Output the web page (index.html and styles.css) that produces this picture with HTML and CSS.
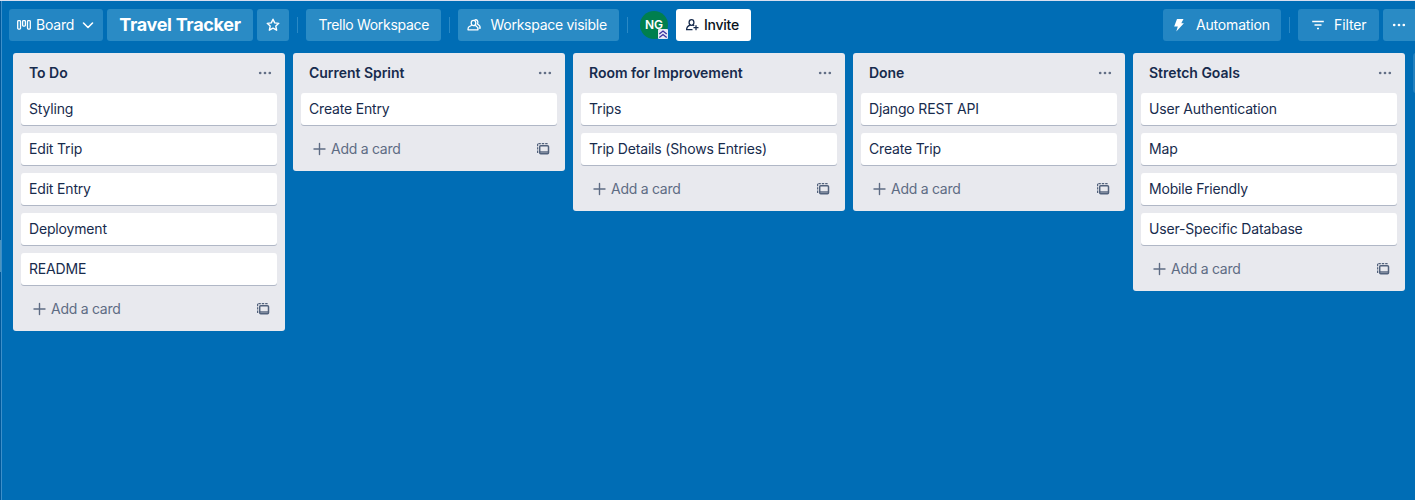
FILE: index.html
```html
<!DOCTYPE html>
<html lang="en">
<head>
<meta charset="utf-8">
<title>Travel Tracker</title>
<link rel="stylesheet" href="styles.css">
</head>
<body>
<svg class="sprite" width="0" height="0">
  <symbol id="dots" viewBox="0 0 16 16"><g fill="currentColor"><circle cx="3.2" cy="8" r="1.35"/><circle cx="8" cy="8" r="1.35"/><circle cx="12.8" cy="8" r="1.35"/></g></symbol>
  <symbol id="plus" viewBox="0 0 16 16"><path d="M8.500 2.500v11M3 8h11" stroke="currentColor" stroke-width="1.4" stroke-linecap="round"/></symbol>
  <symbol id="template" viewBox="0 0 16 16"><g fill="none" stroke="currentColor"><path d="M2.600 12V2.600H13.500" stroke-width="1.200" stroke-dasharray="2.4 1"/><rect x="4.700" y="4.700" width="8.800" height="8" rx="1" stroke-width="1.5"/><path d="M4.800 11h8.600" stroke-width="1.4"/></g></symbol>
</svg>
<div class="app">
  <div class="drawer"><span class="drawer-handle"></span></div>
  <main class="board">
    <header class="header">
      <button class="btn view"><svg width="16" height="16" viewBox="0 0 16 16"><g fill="none" stroke="currentColor" stroke-width="1.3"><rect x="1.7" y="3.7" width="2.8" height="8.4" rx=".8"/><rect x="6.6" y="3.7" width="2.8" height="5.4" rx=".8"/><rect x="11.5" y="3.7" width="2.8" height="8.4" rx=".8"/></g></svg><span class="t-board">Board</span><svg class="chevron" width="12" height="12" viewBox="0 0 12 12"><path d="M1.5 4 6 8.5 10.5 4" fill="none" stroke="currentColor" stroke-width="1.6" stroke-linecap="round" stroke-linejoin="round"/></svg></button>
      <h1 class="btn name">Travel Tracker</h1>
      <button class="btn star"><svg width="16" height="16" viewBox="0 0 16 16"><path d="M8 2.200l1.700 3.700 4.100.45-3 2.750.85 4.100L8 11.200 4.350 13.200l.85-4.100-3-2.750 4.100-.45z" fill="none" stroke="currentColor" stroke-width="1.4" stroke-linejoin="round"/></svg></button>
      <i class="divider"></i>
      <button class="btn workspace">Trello Workspace</button>
      <i class="divider"></i>
      <button class="btn visible"><svg width="16" height="16" viewBox="0 0 16 16"><g fill="none" stroke="currentColor" stroke-width="1.3" stroke-linejoin="round"><ellipse cx="7.500" cy="6" rx="2.300" ry="2.700"/><path d="M5.800 8.200 3 9.700c-.8.500-1 1.500-1 3.100h10c0-1.600-.2-2.600-1-3.100L9.200 8.200"/><path d="M8.500 3c2.700-.9 4.100 1.300 3 4l1.600 1.300c.9.700 1.100 1.500 1.100 2.900h-1.700"/></g></svg><span>Workspace visible</span></button>
      <i class="divider"></i>
      <div class="avatar">NG<svg class="admin" width="10" height="10" viewBox="0 0 10 10"><rect width="10" height="10" rx="1" fill="#e9e8f5"/><path d="M1.300 5 5 2l3.700 3M1.300 8.500 5 5.500l3.700 3" fill="none" stroke="#3b2fa0" stroke-width="1.300"/></svg></div>
      <button class="btn invite"><svg width="16" height="16" viewBox="0 0 16 16"><g fill="none" stroke="currentColor" stroke-width="1.3" stroke-linecap="round"><ellipse cx="7.500" cy="5.500" rx="2.400" ry="2.800"/><path d="M8 12.700H2.600c0-2.600.8-3.600 3.500-4.600M9 8.100l.8.400M12 8.700v4M10 10.700h4"/></g></svg><span>Invite</span></button>
      <span class="spacer"></span>
      <button class="btn automation"><svg width="16" height="16" viewBox="0 0 16 16"><path d="M6 2h6.500l-2.200 4.200h2.600L5.300 14.500l1.500-5H3.200z" fill="currentColor"/></svg><span>Automation</span></button>
      <i class="divider"></i>
      <button class="btn filter"><svg width="16" height="16" viewBox="0 0 16 16"><path d="M2.200 4.500h11.600M4.500 8h7M7 11.500h2" stroke="currentColor" stroke-width="1.500"/></svg><span>Filter</span></button>
      <button class="btn more"><svg width="16" height="16"><use href="#dots"/></svg></button>
    </header>
    <div class="lists">
      <section class="list">
        <h2><span>To Do</span><svg width="16" height="16"><use href="#dots"/></svg></h2>
        <div class="card">Styling</div><div class="card">Edit Trip</div><div class="card">Edit Entry</div><div class="card">Deployment</div><div class="card">README</div>
        <div class="add"><svg width="16" height="16"><use href="#plus"/></svg><span>Add a card</span><svg class="tpl" width="16" height="16"><use href="#template"/></svg></div>
      </section>
      <section class="list">
        <h2><span>Current Sprint</span><svg width="16" height="16"><use href="#dots"/></svg></h2>
        <div class="card">Create Entry</div>
        <div class="add"><svg width="16" height="16"><use href="#plus"/></svg><span>Add a card</span><svg class="tpl" width="16" height="16"><use href="#template"/></svg></div>
      </section>
      <section class="list">
        <h2><span>Room for Improvement</span><svg width="16" height="16"><use href="#dots"/></svg></h2>
        <div class="card">Trips</div><div class="card">Trip Details (Shows Entries)</div>
        <div class="add"><svg width="16" height="16"><use href="#plus"/></svg><span>Add a card</span><svg class="tpl" width="16" height="16"><use href="#template"/></svg></div>
      </section>
      <section class="list">
        <h2><span>Done</span><svg width="16" height="16"><use href="#dots"/></svg></h2>
        <div class="card">Django REST API</div><div class="card">Create Trip</div>
        <div class="add"><svg width="16" height="16"><use href="#plus"/></svg><span>Add a card</span><svg class="tpl" width="16" height="16"><use href="#template"/></svg></div>
      </section>
      <section class="list">
        <h2><span>Stretch Goals</span><svg width="16" height="16"><use href="#dots"/></svg></h2>
        <div class="card">User Authentication</div><div class="card">Map</div><div class="card">Mobile Friendly</div><div class="card">User-Specific Database</div>
        <div class="add"><svg width="16" height="16"><use href="#plus"/></svg><span>Add a card</span><svg class="tpl" width="16" height="16"><use href="#template"/></svg></div>
      </section>
      <div class="add-list"></div>
    </div>
  </main>
</div>
</body>
</html>
```
FILE: styles.css
```css
* { box-sizing: border-box; }
body { margin: 0; background: #006db5; color: #172b4d; font: 14px/20px Inter, "Liberation Sans", sans-serif; overflow: hidden; }
.sprite { position: absolute; }
svg { display: block; flex: none; }
.app { display: flex; height: 500px; border-top: 1px solid #d9dff0; }
.drawer { width: 2px; flex: none; background: #00599b; border-right: 1px solid #3d8fc9; padding-top: 239px; }
.drawer-handle { display: block; width: 1px; height: 32px; background: #4c93bc; }
.board { flex: 1; min-width: 0; overflow: hidden; }
.header { display: flex; align-items: center; height: 48px; padding-left: 7px; }
.btn { display: flex; align-items: center; flex: none; height: 32px; margin: 0 4px 0 0; padding: 0; border: 0; border-radius: 3px; background: #2a8bc5; color: #fff; font: inherit; white-space: nowrap; }
.view { width: 94px; padding-left: 7px; background: #2486c3; }
.t-board { margin-left: 4px; width: 46px; text-align: left; letter-spacing: -.2px; }
.name { width: 146px; justify-content: center; font-size: 18px; font-weight: 700; letter-spacing: -.3px; }
.star { width: 32px; justify-content: center; }
.divider { width: 1px; height: 16px; flex: none; margin: 0 8px 0 4px; background: #2a89c5; }
.workspace { width: 135px; padding-left: 12.5px; margin-right: 4px; letter-spacing: -.3px; }
.visible { width: 161px; padding-left: 8px; gap: 8.5px; margin-right: 4px; letter-spacing: -.27px; }
.avatar { position: relative; width: 28px; height: 28px; margin: 0 8px 0 4px; border-radius: 50%; background: #007f4f; color: #fff; font-size: 12px; font-weight: 600; line-height: 28px; text-align: center; flex: none; }
.admin { position: absolute; right: 0; bottom: 0; }
.invite { width: 75px; padding-left: 8px; gap: 4px; background: #fff; color: #172b4d; }
.invite span { color: #091321; font-weight: 500; letter-spacing: -.25px; }
.spacer { flex: 1; }
.automation { width: 118px; padding-left: 8px; gap: 9px; background: #2486c3; letter-spacing: -.18px; }
.filter { width: 81px; padding-left: 12px; gap: 8px; background: #2486c3; letter-spacing: -.1px; }
.more { width: 32px; padding-left: 8px; margin-right: 0; border-radius: 3px 0 0 3px; }
.lists { display: flex; align-items: flex-start; gap: 8px; padding: 4px 0 0 11px; }
.list { flex: none; width: 272px; padding: 0 8px 6px; border-radius: 3px; background: #e8e9ee; }
.list h2 { display: flex; justify-content: space-between; align-items: center; height: 40px; margin: 0; padding: 0 4px 0 8px; font-size: 14px; font-weight: 600; letter-spacing: -.03px; }
.list h2 svg { color: #626f86; }
.card { height: 32px; margin-bottom: 8px; padding: 6px 8px; border-radius: 3px; background: #fff; box-shadow: 0 1px 0 #b0b7c6; letter-spacing: -.17px; }
.add { display: flex; align-items: center; height: 32px; padding: 0 6px 0 10px; color: #5e6c84; gap: 4px; letter-spacing: -.26px; }
.tpl { margin-left: auto; color: #52627c; }
.add-list { flex: none; width: 272px; height: 40px; border-radius: 3px; background: #2482c0; }
```
